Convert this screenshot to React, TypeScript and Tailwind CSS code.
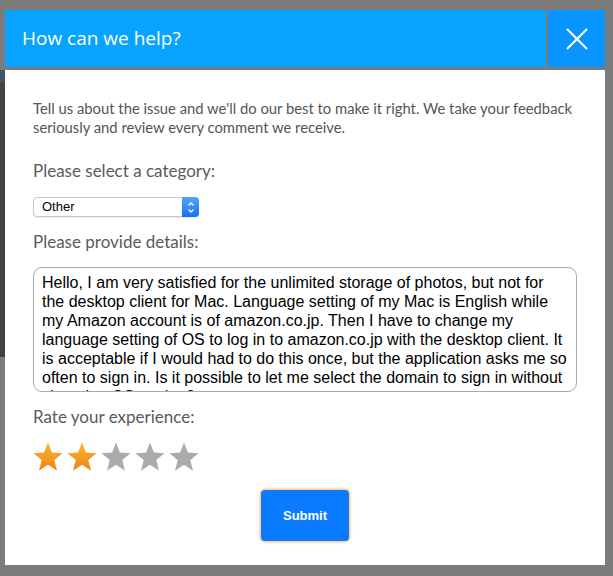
import { X } from 'lucide-react';

const details = [
  'Hello, I am very satisfied for the unlimited storage of photos, but not for',
  'the desktop client for Mac. Language setting of my Mac is English while',
  'my Amazon account is of amazon.co.jp. Then I have to change my',
  'language setting of OS to log in to amazon.co.jp with the desktop client. It',
  'is acceptable if I would had to do this once, but the application asks me so',
  'often to sign in. Is it possible to let me select the domain to sign in without',
  'changing OS setting?',
];

function Star({ filled, id }: { filled: boolean; id: string }) {
  return (
    <svg width="30" height="30" viewBox="0 0 30 30">
      <defs>
        <linearGradient id={id} x1="0" y1="0" x2="0" y2="1">
          <stop offset="0" stopColor="#fbb42c" />
          <stop offset="1" stopColor="#ee851b" />
        </linearGradient>
      </defs>
      <polygon
        points="15,0.5 18.9,10.6 29.5,11.2 21.3,18 24,28.8 15,22.8 6,28.8 8.7,18 0.5,11.2 11.1,10.6"
        fill={filled ? `url(#${id})` : '#ababab'}
      />
    </svg>
  );
}

function CategorySelect() {
  return (
    <div className="flex h-[20px] w-[166px] items-stretch rounded-[4px] border border-[#c8c8c8] bg-white shadow-[0_1px_1px_rgba(0,0,0,0.08)]">
      <span className="flex-1 pl-[8px] text-[13px] leading-[18px] text-black font-['Liberation_Sans',Arial,sans-serif]">
        Other
      </span>
      <span className="-my-px -mr-px flex w-[17px] items-center justify-center rounded-r-[4px] bg-gradient-to-b from-[#52a5fb] to-[#1670f0]">
        <svg width="8" height="13" viewBox="0 0 8 13" fill="none" stroke="white" strokeWidth="1.3">
          <polyline points="1.5,4.5 4,2 6.5,4.5" />
          <polyline points="1.5,8.5 4,11 6.5,8.5" />
        </svg>
      </span>
    </div>
  );
}

export default function App() {
  return (
    <div className="relative min-h-[576px] w-full overflow-hidden bg-[#7b7b7b] font-['Lato','Open_Sans',sans-serif]">
      <div className="absolute left-0 top-[83px] h-[274px] w-[6px] bg-[#424242]" />
      <div className="absolute left-0 top-[70px] h-[13px] w-[6px] bg-[#405563]" />

      <div className="relative flex flex-col pt-[10px] pl-[5px] pr-[8px]">
        <div className="flex h-[57px]">
          <div className="flex flex-1 items-center bg-[#08a3ff] pl-[17px]">
            <h1 className="text-[19px] font-normal text-white font-['Open_Sans',sans-serif]">How can we help?</h1>
          </div>
          <button className="ml-[2px] flex w-[57px] items-center justify-center bg-[#0895ff] text-white">
            <X className="h-[38px] w-[38px]" strokeWidth={1.3} />
          </button>
        </div>

        <div className="mt-[3px] flex h-[495px] flex-col bg-white px-[28px] pt-[29px]">
          <p className="whitespace-nowrap text-[14.8px] leading-[19px] text-[#555]">
            Tell us about the issue and we'll do our best to make it right. We take your feedback
            <br />
            seriously and review every comment we receive.
          </p>

          <label className="mt-[23px] text-[17px] leading-[22px] text-[#5a5a5a]">Please select a category:</label>
          <div className="mt-[15px]">
            <CategorySelect />
          </div>

          <label className="mt-[14px] text-[17px] leading-[22px] text-[#5a5a5a]">Please provide details:</label>
          <div className="mt-[14px] h-[125px] overflow-hidden rounded-[9px] border border-[#a9a9a9] px-[8px] pt-[5px] font-['Liberation_Sans',Arial,sans-serif] text-[16px] leading-[19px] text-black">
            {details.map(line => (
              <div key={line} className="whitespace-nowrap">{line}</div>
            ))}
          </div>

          <label className="mt-[14px] text-[17px] leading-[22px] text-[#5a5a5a]">Rate your experience:</label>
          <div className="mt-[14px] flex gap-[4px]">
            {[0, 1, 2, 3, 4].map(i => (
              <Star key={i} id={`star-${i}`} filled={i < 2} />
            ))}
          </div>

          <div className="mt-[18px] flex justify-center">
            <button className="h-[51px] w-[88px] rounded-[4px] bg-[#0a7bff] text-[13px] font-bold text-white font-['Liberation_Sans',Arial,sans-serif] shadow-[0_0_3px_1px_#f7b36a]">
              Submit
            </button>
          </div>
        </div>
      </div>
    </div>
  );
}
